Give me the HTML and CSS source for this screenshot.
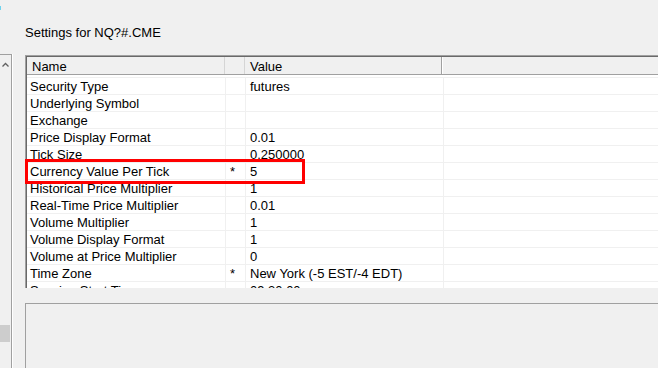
FILE: index.html
```html
<!DOCTYPE html>
<html>
<head>
<meta charset="utf-8">
<link rel="stylesheet" href="styles.css">
</head>
<body>
<div class="window">
  <div class="sidebar">
    <svg class="scroll-up" width="7" height="5" viewBox="0 0 7 5"><polyline points="0.5,4.5 3.5,1.5 6.5,4.5" fill="none" stroke="#606060" stroke-width="1.3"/></svg>
    <div class="thumb"></div>
  </div>
  <div class="main">
    <div class="title">Settings for NQ?#.CME</div>
    <div class="grid">
      <div class="grid-inner">
        <div class="head">
          <div class="hc c-name">Name</div>
          <div class="hc c-star"></div>
          <div class="hc c-value">Value</div>
          <div class="hc c-rest"></div>
        </div>
        <div class="body">
          <div class="rows">
            <div class="row"><div class="cell c-name">Security Type</div><div class="cell c-star"></div><div class="cell c-value">futures</div><div class="cell c-rest"></div></div>
            <div class="row"><div class="cell c-name">Underlying Symbol</div><div class="cell c-star"></div><div class="cell c-value"></div><div class="cell c-rest"></div></div>
            <div class="row"><div class="cell c-name">Exchange</div><div class="cell c-star"></div><div class="cell c-value"></div><div class="cell c-rest"></div></div>
            <div class="row"><div class="cell c-name">Price Display Format</div><div class="cell c-star"></div><div class="cell c-value">0.01</div><div class="cell c-rest"></div></div>
            <div class="row"><div class="cell c-name">Tick Size</div><div class="cell c-star"></div><div class="cell c-value">0.250000</div><div class="cell c-rest"></div></div>
            <div class="row"><div class="cell c-name">Currency Value Per Tick</div><div class="cell c-star">*</div><div class="cell c-value">5</div><div class="cell c-rest"></div></div>
            <div class="row"><div class="cell c-name">Historical Price Multiplier</div><div class="cell c-star"></div><div class="cell c-value">1</div><div class="cell c-rest"></div></div>
            <div class="row"><div class="cell c-name">Real-Time Price Multiplier</div><div class="cell c-star"></div><div class="cell c-value">0.01</div><div class="cell c-rest"></div></div>
            <div class="row"><div class="cell c-name">Volume Multiplier</div><div class="cell c-star"></div><div class="cell c-value">1</div><div class="cell c-rest"></div></div>
            <div class="row"><div class="cell c-name">Volume Display Format</div><div class="cell c-star"></div><div class="cell c-value">1</div><div class="cell c-rest"></div></div>
            <div class="row"><div class="cell c-name">Volume at Price Multiplier</div><div class="cell c-star"></div><div class="cell c-value">0</div><div class="cell c-rest"></div></div>
            <div class="row"><div class="cell c-name">Time Zone</div><div class="cell c-star">*</div><div class="cell c-value">New York (-5 EST/-4 EDT)</div><div class="cell c-rest"></div></div>
            <div class="row"><div class="cell c-name">Session Start Time</div><div class="cell c-star"></div><div class="cell c-value">09:30:00</div><div class="cell c-rest"></div></div>
          </div>
        </div>
      </div>
    </div>
    <div class="desc"></div>
  </div>
</div>
<div class="speck"></div>
<div class="highlight"></div>
</body>
</html>
```

FILE: styles.css
```css
html, body {
  margin: 0;
  padding: 0;
}
body {
  width: 658px;
  height: 368px;
  overflow: hidden;
  background: #f0f0f0;
  font-family: "Liberation Sans", Arial, sans-serif;
  font-size: 13px;
  color: #000;
  position: relative;
}
.window {
  display: flex;
  height: 368px;
}
.sidebar {
  width: 11px;
  flex: none;
  margin-top: 54px;
  border-top: 1px solid #a0a0a0;
  border-right: 1px solid #a0a0a0;
  box-shadow: 1px 0 0 #ffffff;
  display: flex;
  flex-direction: column;
  align-items: flex-start;
}
.scroll-up {
  display: block;
  margin: 7px 0 0 2px;
}
.thumb {
  margin-top: auto;
  margin-bottom: 26px;
  width: 10px;
  height: 17px;
  background: #cdcdcd;
}
.main {
  flex: 1;
  min-width: 0;
  margin-left: 13px;
  display: flex;
  flex-direction: column;
}
.title {
  margin-top: 25px;
  height: 15px;
  line-height: 15px;
  white-space: nowrap;
}
.grid {
  margin-top: 15px;
  height: 232px;
  overflow: hidden;
  border-top: 1px solid #a0a0a0;
  border-left: 1px solid #a0a0a0;
  flex: none;
}
.grid-inner {
  border-top: 1px solid #696969;
  border-left: 1px solid #696969;
  height: 100%;
  background: #fff;
}
.head {
  display: flex;
  height: 17px;
  background: #f0f0f0;
  border-bottom: 1px solid #a0a0a0;
}
.hc {
  box-sizing: border-box;
  height: 17px;
  line-height: 19px;
  white-space: nowrap;
  border-right: 1px solid #d5d5d5;
  flex: none;
}
.head .c-name { width: 198px; padding-left: 5px; }
.head .c-star { width: 20px; }
.head .c-value { width: 197px; padding-left: 5px; border-right-color: #a0a0a0; box-shadow: 1px 0 0 #ffffff; }
.head .c-rest { flex: 1; border-right: 0; }
.body {
  padding-top: 2px;
  background: #fff;
}
.rows {
  border-top: 1px solid #f0f0f0;
}
.row {
  display: flex;
  height: 16px;
  border-bottom: 1px solid #f0f0f0;
}
.cell {
  box-sizing: border-box;
  height: 16px;
  line-height: 17px;
  white-space: nowrap;
  flex: none;
  border-right: 1px solid #f0f0f0;
}
.row .c-name { width: 199px; padding-left: 3px; }
.row .c-star { width: 20px; padding-left: 4px; }
.row .c-value { width: 198px; padding-left: 4px; }
.row .c-rest { flex: 1; border-right: 0; }
.desc {
  margin-top: 15px;
  flex: 1;
  border-top: 1px solid #a0a0a0;
  border-left: 1px solid #a0a0a0;
  background: #f0f0f0;
}
.speck {
  position: absolute;
  left: 0;
  top: 6px;
  width: 1px;
  height: 4px;
  background: #6fd3ee;
}
.highlight {
  position: absolute;
  left: 25px;
  top: 159px;
  width: 280px;
  height: 25px;
  box-sizing: border-box;
  border: 3px solid #ff0000;
}
```
